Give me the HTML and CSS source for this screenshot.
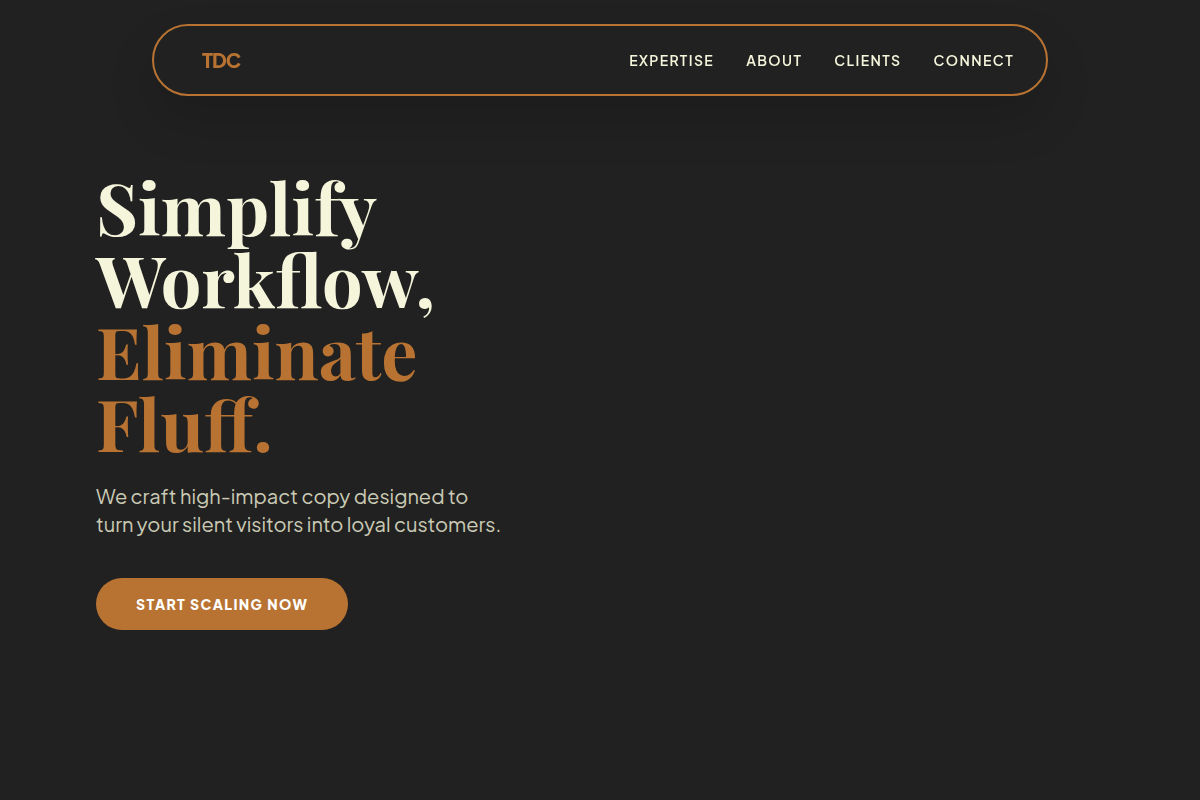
FILE: index.html
```html
<!DOCTYPE html>
<html lang="en">
<head>
    <meta charset="UTF-8">
    <meta name="viewport" content="width=device-width, initial-scale=1.0">
    <title>TDC</title>
    <link rel="stylesheet" href="styles.css">
</head>
<body>
    <!-- Navigation -->
    <header class="site-header">
        <nav class="navbar">
            <a href="#" class="logo">TDC</a>
            <div class="nav-links">
                <a href="#expertise">Expertise</a>
                <a href="#about">About</a>
                <a href="#clients">Clients</a>
                <a href="#connect">Connect</a>
            </div>
        </nav>
    </header>

    <!-- Hero -->
    <main class="hero">
        <div class="hero-content">
            <h1>Simplify Workflow, <span class="accent">Eliminate Fluff.</span></h1>
            <p>We craft high-impact copy designed to<br>turn your silent visitors into loyal customers.</p>
            <button type="button" class="cta">Start Scaling Now</button>
        </div>
    </main>
</body>
</html>
```

FILE: styles.css
```css
:root {
    --charcoal: #212121;
    --copper: #b87333;
    --beige: #f5f5dc;
}
* {
    box-sizing: border-box;
}
body {
    margin: 0;
    background: var(--charcoal);
    color: var(--beige);
    font-family: "Plus Jakarta Sans", Inter, sans-serif;
}
/* stays over the hero while scrolling */
.site-header {
    position: fixed;
    top: 0;
    left: 0;
    right: 0;
    padding: 24px 24px 0;
}
.navbar {
    display: flex;
    align-items: center;
    justify-content: space-between;
    max-width: 896px;
    min-height: 72px;
    margin: 0 auto;
    padding: 12px 32px;
    background: var(--charcoal);
    border: 2px solid var(--copper);
    border-radius: 36px;
    box-shadow: 0 24px 50px rgba(0, 0, 0, 0.14);
}
.logo {
    padding: 0 16px;
    color: var(--copper);
    font-size: 20px;
    font-weight: 800;
    line-height: 28px;
    letter-spacing: -1px;
    text-decoration: none;
}
.nav-links {
    display: flex;
    gap: 32px;
}
.nav-links a {
    color: var(--beige);
    font-size: 14px;
    font-weight: 600;
    line-height: 20px;
    letter-spacing: 0.1em;
    text-decoration: none;
    text-transform: uppercase;
}
.nav-links a:hover {
    color: var(--copper);
}
.hero {
    display: flex;
    align-items: center;
    min-height: 100vh;
    padding: 0 96px;
}
.hero-content {
    max-width: 472px;
}
h1 {
    margin: 0 0 24px;
    font-family: "Playfair Display", "Liberation Serif", serif;
    font-size: 72px;
    font-weight: 700;
    line-height: 72px;
}
.accent {
    display: block;
    color: var(--copper);
}
.hero p {
    margin: 0 0 40px;
    font-size: 20px;
    line-height: 28px;
    opacity: 0.8;
}
.cta {
    padding: 16px 40px;
    border: none;
    border-radius: 26px;
    background: var(--copper);
    color: #fff;
    font-family: inherit;
    font-size: 14px;
    font-weight: 800;
    line-height: 20px;
    letter-spacing: 0.1em;
    text-transform: uppercase;
    cursor: pointer;
}
.cta:hover {
    background: #a5662c;
}
```
